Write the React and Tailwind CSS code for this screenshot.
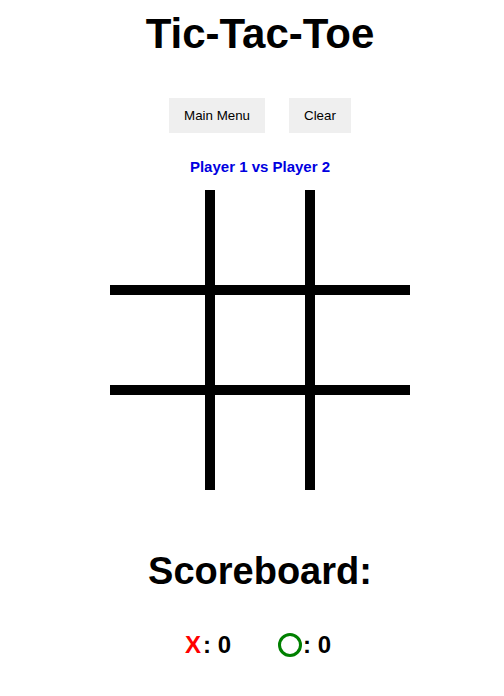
import { useState } from "react";

const cellBorders = (i) => {
  const row = Math.floor(i / 3);
  const col = i % 3;
  return [
    col < 2 ? "border-r-[5px]" : "",
    col > 0 ? "border-l-[5px]" : "",
    row < 2 ? "border-b-[5px]" : "",
    row > 0 ? "border-t-[5px]" : "",
  ].join(" ");
};

const App = () => {
  const [board, setBoard] = useState(Array(9).fill(null));
  const [score] = useState({ x: 0, o: 0 });

  return (
    <div
      className="w-full min-h-screen bg-white text-black flex flex-col items-center pl-[16px]"
      style={{ fontFamily: '"Liberation Sans", Arial, sans-serif' }}
    >
      <h1 className="mt-[10px] text-[42px] leading-[48px] font-bold">Tic-Tac-Toe</h1>

      {/* Menu buttons */}
      <div className="mt-[40px] flex gap-[24px]">
        <button className="bg-[#efefef] px-[15px] py-[10px] text-[13.33px] leading-[15px]">Main Menu</button>
        <button
          className="bg-[#efefef] px-[15px] py-[10px] text-[13.33px] leading-[15px]"
          onClick={() => setBoard(Array(9).fill(null))}
        >
          Clear
        </button>
      </div>

      <p className="mt-[25px] text-[15px] leading-[17px] font-bold text-[#0000e0]">Player 1 vs Player 2</p>

      {/* Board */}
      <div className="mt-[15px] grid grid-cols-3 w-[300px] h-[300px]">
        {board.map((v, i) => (
          <div key={i} className={`w-[100px] h-[100px] border-black ${cellBorders(i)}`}>
            {v}
          </div>
        ))}
      </div>

      <h2 className="mt-[60px] text-[38px] leading-[43px] font-bold">Scoreboard:</h2>

      <div className="mt-[38px] flex items-center gap-[47px] text-[24px] leading-[28px] font-bold">
        <div className="flex items-center -ml-[4px]">
          <span className="text-[#ff0000]">X</span>
          <span className="ml-[2px]">: {score.x}</span>
        </div>
        <div className="flex items-center">
          <span className="inline-block w-[24px] h-[24px] rounded-full border-[3px] border-[#008000]"></span>
          <span className="ml-[1px]">: {score.o}</span>
        </div>
      </div>
    </div>
  );
};

export default App;
